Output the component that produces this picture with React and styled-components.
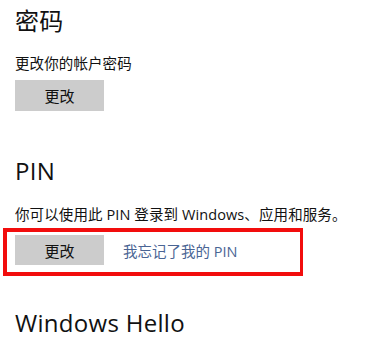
import React from "react"
import styled, { createGlobalStyle } from "styled-components"

const GlobalStyle = createGlobalStyle`
  html, body {
    margin: 0;
    padding: 0;
    background: #fff;
  }
  body {
    font-family: "Open Sans", "Noto Sans CJK SC", sans-serif;
    color: #000;
  }
`

const Page = styled.div`
  width: 387px;
  height: 354px;
  overflow: hidden;
  padding: 5px 0 0 15px;
  box-sizing: border-box;
`

const Section = styled.section`
  margin-top: ${props => props.gap || 0}px;
`

const Title = styled.h2`
  margin: 0;
  font-size: 24px;
  line-height: 32px;
  font-weight: 400;
  letter-spacing: 0.3px;
  color: #111;
`

const Description = styled.p`
  margin: ${props => props.gap || 17}px 0 0;
  font-size: 14.5px;
  line-height: 20px;
  letter-spacing: 0.1px;
  color: #111;
`

const Button = styled.button`
  display: block;
  width: 89px;
  height: ${props => props.h || 30}px;
  margin-top: ${props => props.gap || 0}px;
  padding: 0;
  border: none;
  background: #cccccc;
  font-family: inherit;
  font-size: 15px;
  color: #111;
`

const Highlight = styled.div`
  display: flex;
  align-items: center;
  gap: 19px;
  width: 300px;
  box-sizing: border-box;
  margin: 3px 0 0 -12px;
  padding: 3px 0 7px 8px;
  border: 4px solid #f20d0d;
  border-width: 4px 3px 4px 4px;
`

const Link = styled.a`
  font-size: 14.5px;
  color: #4a6594;
  text-decoration: none;
`

export default function App() {
  return (
    <>
      <GlobalStyle />
      <Page>
        <Section>
          <Title>密码</Title>
          <Description>更改你的帐户密码</Description>
          <Button gap={6} h={31}>更改</Button>
        </Section>
        <Section gap={44}>
          <Title>PIN</Title>
          <Description gap={18}>你可以使用此 PIN 登录到 Windows、应用和服务。</Description>
          <Highlight>
            <Button>更改</Button>
            <Link href="#">我忘记了我的 PIN</Link>
          </Highlight>
        </Section>
        <Section gap={31}>
          <Title>Windows Hello</Title>
        </Section>
      </Page>
    </>
  )
}
